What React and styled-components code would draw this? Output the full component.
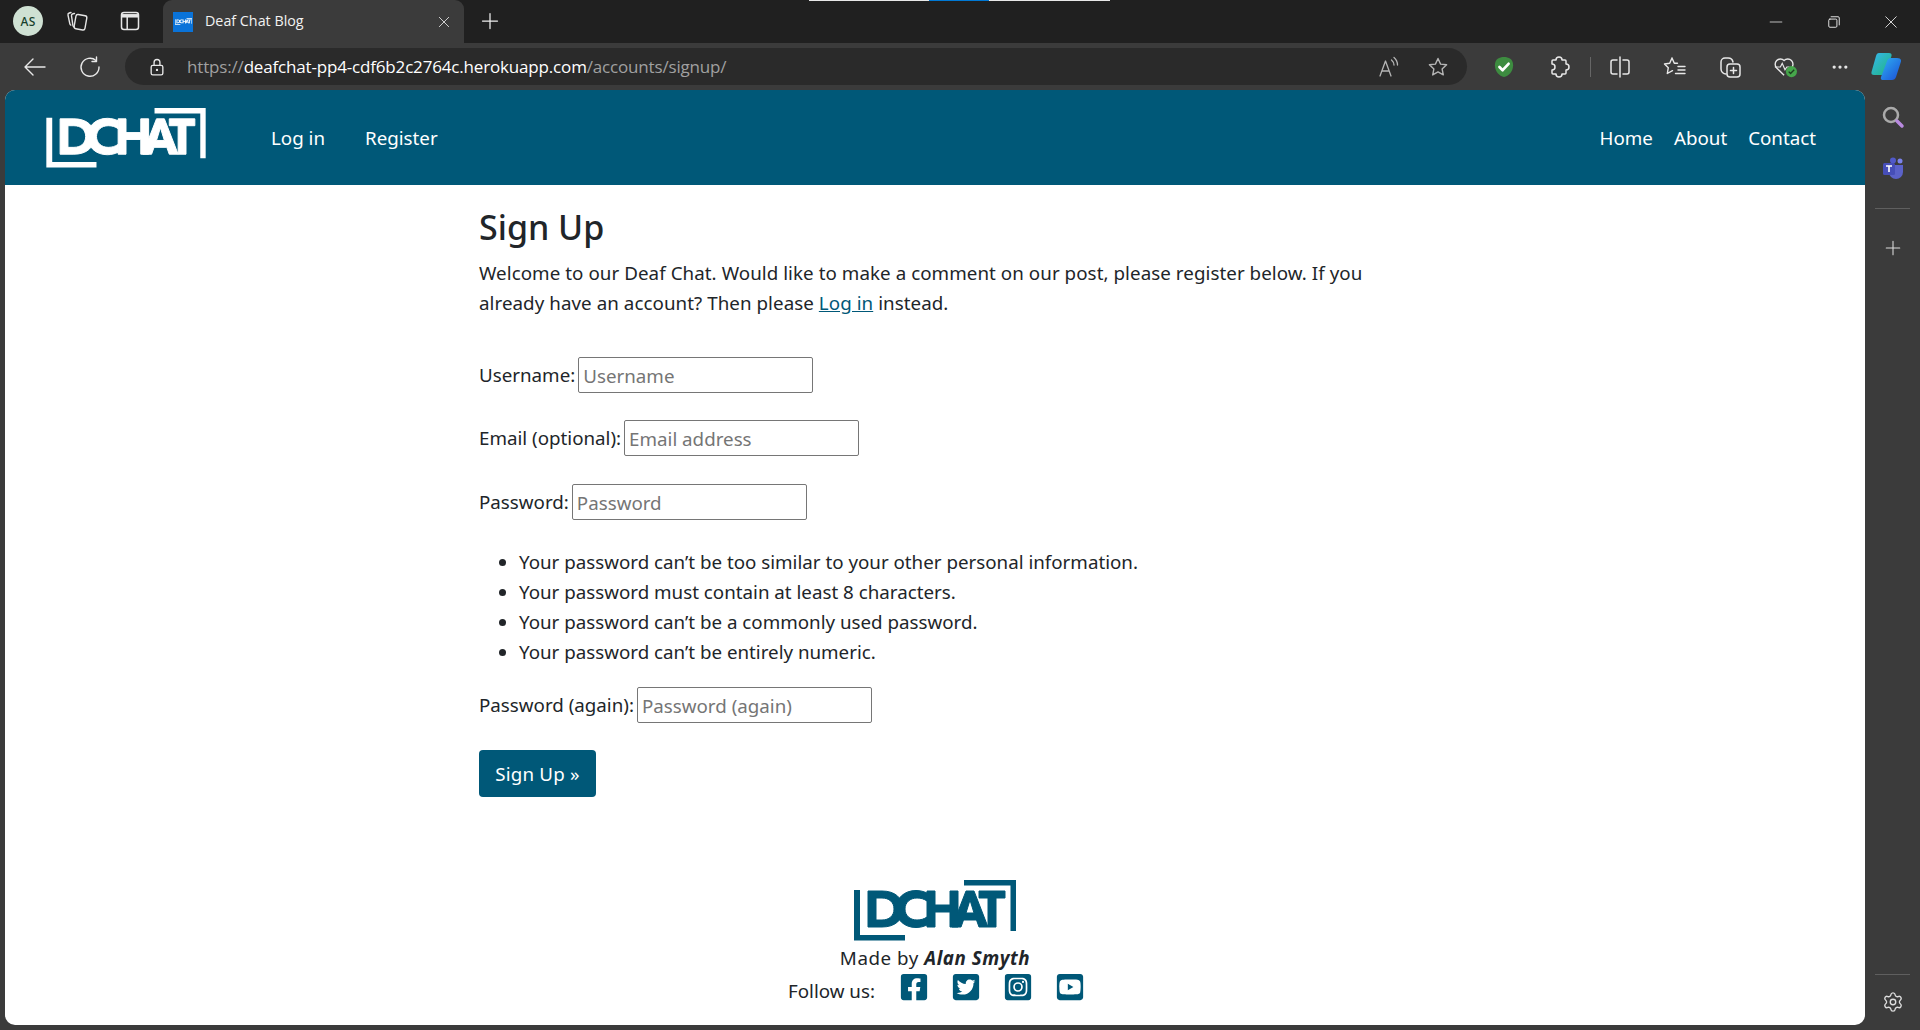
import React from "react";
import styled, { createGlobalStyle } from "styled-components";
import { FaFacebookSquare, FaTwitterSquare, FaInstagramSquare, FaYoutubeSquare } from "react-icons/fa";
import { Settings } from "lucide-react";

const Global = createGlobalStyle`
  html, body { margin: 0; padding: 0; height: 100%; overflow: hidden; background: #3b3b3b; }
  * { box-sizing: border-box; }
  #root { height: 100%; }
`;

const FONT = `"Noto Sans", "Open Sans", Arial, sans-serif`;

const Browser = styled.div`
  width: 1920px; height: 1030px; display: flex; flex-direction: column;
  background: #3b3b3b; font-family: ${FONT}; position: relative;
`;
const LoadBar = styled.div`
  position: absolute; left: 809px; top: 0; width: 301px; height: 1px; background: #e8e8e8;
  &::after { content: ""; position: absolute; left: 120px; width: 60px; height: 1px; background: #0078d4; }
`;
const TabStrip = styled.div`
  height: 43px; background: #202020; display: flex; align-items: flex-end; flex: none;
`;
const Avatar = styled.div`
  width: 30px; height: 30px; border-radius: 50%; background: #cfe1d3; color: #17402c;
  font-size: 12px; display: flex; align-items: center; justify-content: center; font-weight: 500;
  margin: 0 0 7px 13px; letter-spacing: .3px;
`;
const StripIcon = styled.div`
  width: 24px; height: 24px; margin: 0 0 10px ${p => p.$ml}px; color: #e6e6e6; display: flex;
  align-items: center; justify-content: center;
`;
const Tab = styled.div`
  margin-left: 21px; width: 301px; height: 43px; background: #3b3b3b; border-radius: 9px 9px 0 0;
  display: flex; align-items: center; padding: 0 13px 0 10px; color: #f2f2f2; position: relative;
`;
const Favicon = styled.div`
  width: 20px; height: 20px; background: #0a73d9; display: flex; align-items: center; justify-content: center; flex: none;
`;
const TabTitle = styled.span`
  margin-left: 12px; flex: 1; font-family: "Open Sans", sans-serif; font-size: 14.3px; position: relative; top: -1px;
`;
const NewTab = styled.div`
  margin: 0 0 10px 14px; width: 24px; height: 24px; color: #eee; display: flex; align-items: center; justify-content: center;
`;
const WindowBtns = styled.div`
  margin: 0 0 0 auto; display: flex; height: 43px; align-items: center; color: #eee;
`;
const WinBtn = styled.div`
  width: 57.5px; height: 43px; display: flex; align-items: center; justify-content: center;
`;
const Toolbar = styled.div`
  height: 47px; flex: none; display: flex; align-items: center; background: #3b3b3b; padding-left: 19px; color: #e8e8e8;
`;
const NavBtn = styled.div`
  width: 32px; height: 32px; margin-right: ${p => p.$mr || 0}px; display: flex; align-items: center; justify-content: center;
`;
const Address = styled.div`
  width: 1342px; height: 37px; background: #2a2a2a; border-radius: 19px; display: flex; align-items: center;
  padding-left: 22px; font-size: 17px; font-family: "Open Sans", sans-serif; letter-spacing: -0.17px;
`;
const Lock = styled.div`
  width: 20px; display: flex; justify-content: center; margin-right: 20px; color: #e8e8e8;
`;
const UrlDim = styled.span`color: #a0a0a0;`;
const UrlMain = styled.span`color: #fff;`;
const AddrIcons = styled.div`
  margin-left: auto; display: flex; align-items: center; gap: 25px; padding-right: 17px; color: #b5b5b5;
`;
const ToolIcons = styled.div`
  display: flex; align-items: center; margin-left: 25px;
`;
const ToolIcon = styled.div`
  width: 24px; height: 24px; margin-right: ${p => p.$mr}px; display: flex; align-items: center; justify-content: center; color: #e8e8e8;
`;
const Divider = styled.div`
  width: 1px; height: 20px; background: #666; margin-right: 17px;
`;
const Body = styled.div`
  flex: 1; display: flex; min-height: 0; padding-left: 5px; padding-bottom: 5px;
`;
const Page = styled.div`
  flex: 1; min-width: 0; background: #fff; border-radius: 10px; overflow: hidden; display: flex; flex-direction: column;
  color: #212529; font-size: 18.75px; line-height: 30px;
`;
const Side = styled.div`
  width: 55px; flex: none; display: flex; flex-direction: column; align-items: center; padding-top: 15px;
`;
const SideIcon = styled.div`
  width: 24px; height: 24px; margin-bottom: ${p => p.$mb || 0}px; display: flex; align-items: center; justify-content: center; color: #ddd;
`;
const SideRule = styled.div`
  width: 35px; height: 1px; background: #5f5f5f; margin-bottom: ${p => p.$mb}px;
`;
const NavBar = styled.nav`
  height: 95px; background: #005878; display: flex; align-items: center; padding: 0 49px 0 41px; flex: none;
`;
const NavLink = styled.a`
  color: #fff; font-size: 18.75px; margin-left: ${p => p.$ml}px;
`;
const Spacer = styled.div`flex: 1;`;
const Main = styled.main`
  flex: 1; padding: 20px 0 0 474px; width: 1374px; min-height: 0;
`;
const Title = styled.h1`
  font-size: 34px; line-height: 44px; font-weight: 500; margin: 0 0 9px; color: #212529;
`;
const Intro = styled.p`
  margin: 0 0 39px; width: 900px; letter-spacing: .06px;
  a { color: #005878; }
`;
const Row = styled.p`
  margin: 0 0 ${p => p.$mb ?? 27}px; display: flex; align-items: center; height: 36px; gap: 3px;
`;
const Field = styled.input`
  width: 235px; height: 36px; border: 1px solid #767676; border-radius: 2px; padding: 0 4px;
  font: inherit; color: #212529;
  &::placeholder { color: #757575; }
`;
const Rules = styled.ul`
  margin: 0 0 20px; padding-left: 40px;
`;
const Submit = styled.button`
  display: block; width: 117px; height: 47px; background: #005878; color: #fff; border: 0; border-radius: 4px;
  font: inherit; padding: 0; letter-spacing: .2px;
`;
const Footer = styled.footer`
  flex: none; height: 145px; display: flex; flex-direction: column; align-items: center;
`;
const MadeBy = styled.div`
  line-height: 30px; margin-top: 2px; letter-spacing: .55px; strong { font-style: italic; font-weight: 700; }
`;
const Social = styled.div`
  display: flex; align-items: center; margin: 3px 0 0 3px; height: 30px;
`;
const FollowLabel = styled.span`margin-right: 24px;`;
const SocialLink = styled.a`
  color: #005878; display: flex; margin: 0 ${p => p.$mr || 0}px 9px 0;
`;
const LogoMark = styled.svg`
  display: block; flex: none;
`;

const Logo = ({ color, w, h }) => (
  <LogoMark width={w} height={h} viewBox="0 0 162 61" fill={color} role="img" aria-label="DCHAT logo">
    <path d="M0 10h6v45h45v5.500H0zM110 0h52v51h-5.500V5.500H110z" />
    <g stroke={color} strokeWidth="1">
      <path fillRule="evenodd" d="M14 11h14c13 0 21 7 21 18s-8 18-21 18H14zm8 7v22h6c7 0 12-4 12-11s-5-11-12-11z" />
      <path d="M73 13c-3-1.500-7-2.500-11-2.500-12 0-20 8-20 18.500s8 18.500 20 18.500c4 0 8-1 11-2.500v-8c-3 2-6 3-10 3-7 0-12-4.500-12-11s5-11 12-11c4 0 7 1 10 3z" />
      <path d="M73 11h8v14h15V11h8v36h-8V32H81v15h-8z" />
      <path fillRule="evenodd" d="M112 11h8l14 36h-9l-2.500-7h-13l-2.500 7h-9zm4 9-4 13h8z" />
      <path d="M125 11h26v7h-9v29h-8V18h-9z" />
    </g>
  </LogoMark>
);

const I = ({ children, s = 24, sw = 1.5, ...r }) => (
  <svg width={s} height={s} viewBox="0 0 24 24" fill="none" stroke="currentColor" strokeWidth={sw} strokeLinecap="round" strokeLinejoin="round" {...r}>{children}</svg>
);

export default function App() {
  return (
    <Browser>
      <Global />
      <LoadBar />
      <TabStrip>
        <Avatar>AS</Avatar>
        <StripIcon $ml={22}>
          <I sw={1.4}>
            <rect x="10" y="6" width="11" height="14.500" rx="2" transform="rotate(10 15.500 13)" />
            <path d="M9.500 4.500L8 4.800c-1 .2-1.600 1-1.500 2l1.400 9.500c.1.800.5 1.300 1.200 1.600" />
            <path d="M6 3.500L4.300 4c-1 .3-1.500 1.200-1.300 2.100l1.800 8.500c.2.700.5 1.200 1 1.500" />
          </I>
        </StripIcon>
        <StripIcon $ml={29}>
          <I sw={1.5}><rect x="3.500" y="3.500" width="17" height="17" rx="2.500" /><path d="M3.500 6.800h17" strokeWidth="3.500" strokeLinecap="butt" /><path d="M9.200 8v12" /></I>
        </StripIcon>
        <Tab>
          <Favicon><Logo color="#fff" w={17} h={7} /></Favicon>
          <TabTitle>Deaf Chat Blog</TabTitle>
          <I s={14} sw={1.4}><path d="M4 4l16 16M20 4L4 20" /></I>
        </Tab>
        <NewTab><I s={20} sw={1.5}><path d="M12 3v18M3 12h18" /></I></NewTab>
        <WindowBtns>
          <WinBtn><I s={14} sw={1.3}><path d="M2 12h20" /></I></WinBtn>
          <WinBtn><I s={14} sw={1.6}><rect x="3" y="7" width="14" height="14" rx="2" /><path d="M7 3h12a2 2 0 0 1 2 2v12" /></I></WinBtn>
          <WinBtn><I s={14} sw={1.5}><path d="M3 3l18 18M21 3L3 21" /></I></WinBtn>
        </WindowBtns>
      </TabStrip>
      <Toolbar>
        <NavBtn $mr={23}><I s={24} sw={1.4}><path d="M22 12H2M10 4l-8 8 8 8" /></I></NavBtn>
        <NavBtn $mr={19}><I s={24} sw={1.4}><path d="M18 5.500A9 9 0 1 0 21 12" /><path d="M18.500 2v4.500H14" /></I></NavBtn>
        <Address>
          <Lock><I s={22} sw={1.6}><rect x="5" y="10" width="14" height="11.500" rx="2" /><path d="M8.500 10V6.500a3.500 3.500 0 0 1 7 0V10" /><circle cx="12" cy="15.500" r=".6" fill="currentColor" /></I></Lock>
          <UrlDim>https://</UrlDim><UrlMain>deafchat-pp4-cdf6b2c2764c.herokuapp.com</UrlMain><UrlDim>/accounts/signup/</UrlDim>
          <AddrIcons>
            <I sw={1.3}><path d="M3 21l5.500-15L14 21M5.200 16h6.600" /><path d="M14.500 5a7 7 0 0 1 2.500 5M17 2.500a10 10 0 0 1 3.500 7.500" /></I>
            <I s={24} sw={1.4}><path d="M12 3.500l2.600 5.600 6 .7-4.500 4.100 1.200 6-5.300-3-5.300 3 1.200-6L3.400 9.800l6-.7z" /></I>
          </AddrIcons>
        </Address>
        <ToolIcons>
          <ToolIcon $mr={31}>
            <svg width="20" height="22" viewBox="0 0 22 24"><path d="M11 1c5 0 10 2 10 9 0 7-5 12-10 13C6 22 1 17 1 10c0-7 5-9 10-9z" fill="#3d8c40" /><path d="M6 12l3.500 3.500L16 8.500" stroke="#fff" strokeWidth="3" fill="none" strokeLinecap="round" strokeLinejoin="round" /></svg>
          </ToolIcon>
          <ToolIcon $mr={19}>
            <I><path d="M9 5a3 3 0 0 1 6 0h3a1 1 0 0 1 1 1v3a3 3 0 0 1 0 6v3a1 1 0 0 1-1 1h-3a3 3 0 0 1-6 0H6a1 1 0 0 1-1-1v-3a3 3 0 0 0 0-6V6a1 1 0 0 1 1-1z" /></I>
          </ToolIcon>
          <Divider />
          <ToolIcon $mr={31}>
            <I><path d="M12 2v20M9 5H5a2 2 0 0 0-2 2v10a2 2 0 0 0 2 2h4M15 5h4a2 2 0 0 1 2 2v10a2 2 0 0 1-2 2h-4" /></I>
          </ToolIcon>
          <ToolIcon $mr={31}>
            <I sw={1.4}><path d="M9 3l2.300 5.200h3.200M9 3L6.700 8.200 1.500 9l3.800 3.700-1 5.800 5.200-2.800" /><path d="M15 11.500h7M15 15h7M12.500 18.500H22" /></I>
          </ToolIcon>
          <ToolIcon $mr={31}>
            <I><rect x="9" y="9" width="13" height="13" rx="3" /><path d="M15.500 12.500v6M12.500 15.500h6M8 19a5 5 0 0 1-5-5V7a4 4 0 0 1 4-4h3a5 5 0 0 1 5 4" /></I>
          </ToolIcon>
          <ToolIcon $mr={31}>
            <svg width="26" height="24" viewBox="0 0 26 24" fill="none"><path d="M12 21L4 13a5.500 5.500 0 0 1 8-8 5.500 5.500 0 0 1 8 8" stroke="#e8e8e8" strokeWidth="1.500" /><path d="M2 12h6l2-4 3 7 2-3h3" stroke="#e8e8e8" strokeWidth="1.300" /><circle cx="20" cy="17" r="6" fill="#46a64b" /><path d="M17 17l2 2 4-4" stroke="#1d3d1f" strokeWidth="1.500" /></svg>
          </ToolIcon>
          <ToolIcon $mr={19}>
            <I s={20}><circle cx="5" cy="12" r="1.200" fill="currentColor" /><circle cx="12" cy="12" r="1.200" fill="currentColor" /><circle cx="19" cy="12" r="1.200" fill="currentColor" /></I>
          </ToolIcon>
          <svg width="30" height="27" viewBox="0 0 30 27">
            <defs>
              <linearGradient id="c1" x1="0" y1="0" x2="1" y2="1"><stop offset="0" stopColor="#36b6f0" /><stop offset="1" stopColor="#1fb57a" /></linearGradient>
              <linearGradient id="c2" x1="0" y1="0" x2="1" y2="1"><stop offset="0" stopColor="#2fb0f2" /><stop offset="1" stopColor="#1b4fd8" /></linearGradient>
            </defs>
            <path d="M8 0h10c2 0 3 1 2.500 3L15 19c-1 2-2 3-4 3H3C1 22 0 21 .5 19L5 3C5.500 1 6.500 0 8 0z" fill="url(#c1)" />
            <path d="M20 5h6c3 0 4.500 1.500 4 3.500L25 24c-.7 2-2 3-4 3h-9c-2 0-2.500-1-2-3l6-16c.7-2 2-3 4-3z" fill="url(#c2)" />
          </svg>
        </ToolIcons>
      </Toolbar>
      <Body>
        <Page>
          <NavBar>
            <Logo color="#fff" w={160} h={60} />
            <NavLink $ml={65}>Log in</NavLink>
            <NavLink $ml={40}>Register</NavLink>
            <Spacer />
            <NavLink $ml={0}>Home</NavLink>
            <NavLink $ml={21}>About</NavLink>
            <NavLink $ml={21}>Contact</NavLink>
          </NavBar>
          <Main>
            <Title>Sign Up</Title>
            <Intro>Welcome to our Deaf Chat. Would like to make a comment on our post, please register below. If you already have an account? Then please <a href="#login">Log in</a> instead.</Intro>
            <Row><label>Username:</label><Field placeholder="Username" /></Row>
            <Row $mb={28}><label>Email (optional):</label><Field placeholder="Email address" /></Row>
            <Row><label>Password:</label><Field placeholder="Password" /></Row>
            <Rules>
              <li>Your password can’t be too similar to your other personal information.</li>
              <li>Your password must contain at least 8 characters.</li>
              <li>Your password can’t be a commonly used password.</li>
              <li>Your password can’t be entirely numeric.</li>
            </Rules>
            <Row><label>Password (again):</label><Field placeholder="Password (again)" /></Row>
            <Submit>Sign Up »</Submit>
          </Main>
          <Footer>
            <Logo color="#005878" w={162} h={61} />
            <MadeBy>Made by <strong>Alan Smyth</strong></MadeBy>
            <Social>
              <FollowLabel>Follow us:</FollowLabel>
              <SocialLink $mr={22}><FaFacebookSquare size={30} /></SocialLink>
              <SocialLink $mr={22}><FaTwitterSquare size={30} /></SocialLink>
              <SocialLink $mr={22}><FaInstagramSquare size={30} /></SocialLink>
              <SocialLink><FaYoutubeSquare size={30} /></SocialLink>
            </Social>
          </Footer>
        </Page>
        <Side>
          <SideIcon $mb={27}>
            <svg width="24" height="24" viewBox="0 0 24 24" fill="none"><circle cx="10" cy="10" r="7" stroke="#aaa" strokeWidth="2.500" /><path d="M16 16l5 5" stroke="#b98ae0" strokeWidth="3.500" strokeLinecap="round" /></svg>
          </SideIcon>
          <SideIcon $mb={28}>
            <svg width="22" height="22" viewBox="0 0 22 22"><circle cx="18" cy="4" r="2.500" fill="#7b83eb" /><circle cx="11" cy="3.500" r="3" fill="#5059c9" /><path d="M7 8h14v7a6 6 0 0 1-14 0z" fill="#5b62c9" /><rect x="1" y="6" width="12" height="12" rx="1.500" fill="#464eb8" /><path d="M4 9h6M7 9v6" stroke="#fff" strokeWidth="1.600" /></svg>
          </SideIcon>
          <SideRule $mb={27} />
          <SideIcon>
            <I s={18} sw={1.4}><path d="M12 3v18M3 12h18" /></I>
          </SideIcon>
          <Spacer />
          <SideRule $mb={15} />
          <SideIcon $mb={11}>
            <Settings size={22} strokeWidth={1.5} />
          </SideIcon>
        </Side>
      </Body>
    </Browser>
  );
}
